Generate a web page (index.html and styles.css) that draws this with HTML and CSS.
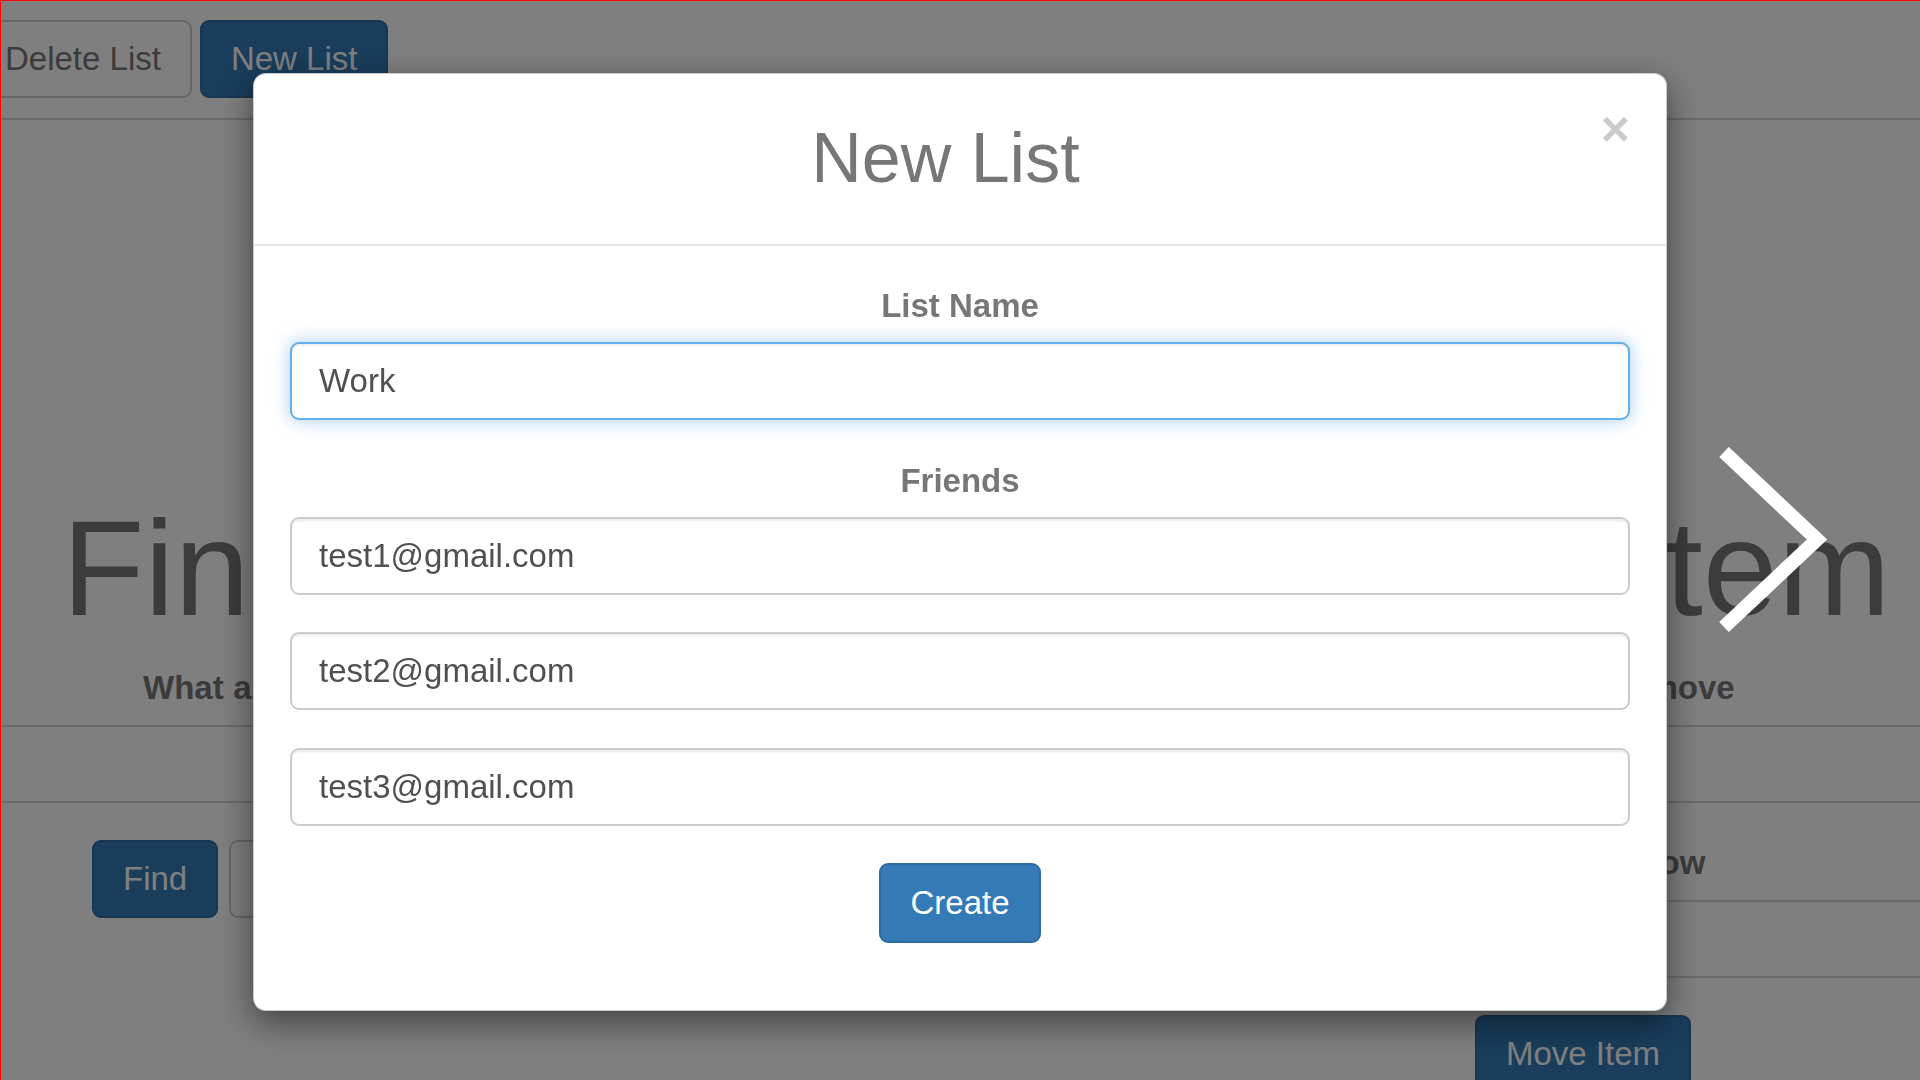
FILE: index.html
```html
<!DOCTYPE html>
<html lang="en">
<head>
<meta charset="utf-8">
<title>New List</title>
<link rel="stylesheet" href="styles.css">
</head>
<body>
<div class="page">
  <div class="topbar">
    <button class="btn btn-default btn-first">Delete List</button>
    <button class="btn btn-primary">New List</button>
  </div>
  <h1 class="hero-title">Find, Add, or Remove an Item</h1>
  <p class="hero-lead">What are you looking for? Find an item in your lists and decide whether to view, edit, copy or remove</p>
  <input class="field field-wide" type="text" value="">
  <div class="panels">
    <div class="panel-left">
      <button class="btn btn-primary">Find</button>
      <button class="btn btn-default">Clear</button>
    </div>
    <div class="panel-right">
      <label class="panel-label">Select list below</label>
      <input class="field field-move" type="text" value="">
      <button class="btn btn-primary btn-move">Move Item</button>
    </div>
  </div>
</div>

<div class="backdrop">
  <div class="modal">
    <div class="modal-header">
      <button class="close">&times;</button>
      <h2 class="modal-title">New List</h2>
    </div>
    <div class="modal-body">
      <label class="form-label">List Name</label>
      <input class="field field-focus" type="text" value="Work">
      <label class="form-label form-label-friends">Friends</label>
      <input class="field field-friend" type="text" value="test1@gmail.com">
      <input class="field field-friend field-gap" type="text" value="test2@gmail.com">
      <input class="field field-friend" type="text" value="test3@gmail.com">
      <div class="actions">
        <button class="btn btn-primary btn-create">Create</button>
      </div>
    </div>
  </div>
</div>

<div class="carousel-next">
  <svg width="150" height="220" viewBox="0 0 150 220">
    <polyline points="24,22 117,109.5 24,197" fill="none" stroke="#ffffff" stroke-width="14" stroke-linejoin="miter" stroke-miterlimit="10"/>
  </svg>
</div>

<div class="frame"></div>
</body>
</html>
```

FILE: styles.css
```css
html, body {
  margin: 0;
  padding: 0;
  width: 1920px;
  height: 1080px;
  overflow: hidden;
  background: #ffffff;
  font-family: "Liberation Sans", Arial, Helvetica, sans-serif;
}

.page {
  width: 1920px;
  height: 1080px;
  overflow: hidden;
}

/* buttons */
.btn {
  box-sizing: border-box;
  height: 78px;
  padding: 0 29px;
  border: 2px solid #cccccc;
  border-radius: 9px;
  font-family: "Liberation Sans", Arial, Helvetica, sans-serif;
  font-size: 33px;
  line-height: 74px;
  white-space: nowrap;
  cursor: pointer;
}

.btn-default {
  background: #ffffff;
  color: #777777;
  border-color: #cccccc;
}

.btn-primary {
  background: #337ab7;
  color: #ffffff;
  border-color: #2e6da4;
}

/* top bar */
.topbar {
  display: flex;
  gap: 8px;
  padding: 20px 0;
  border-bottom: 2px solid #d5d5d5;
}

.btn-first {
  margin-left: -26px;
}

/* hero */
.hero-title {
  margin: 375px 0 0 0;
  padding-left: 62px;
  font-size: 135px;
  line-height: 148px;
  font-weight: 400;
  color: #777777;
  white-space: nowrap;
  word-spacing: 7px;
}

.hero-lead {
  margin: 22px 0 0 0;
  padding-left: 143px;
  font-size: 33px;
  line-height: 46px;
  font-weight: 700;
  color: #777777;
  white-space: nowrap;
  word-spacing: 0.45px;
}

/* fields */
.field {
  display: block;
  box-sizing: border-box;
  height: 78px;
  padding: 0 27px;
  border: 2px solid #cccccc;
  border-radius: 9px;
  background: #ffffff;
  font-family: "Liberation Sans", Arial, Helvetica, sans-serif;
  font-size: 33px;
  color: #505050;
  box-shadow: inset 0 2px 2px rgba(0, 0, 0, 0.075);
  outline: none;
}

.field-wide {
  width: 1960px;
  margin: 14px 0 0 -20px;
  border-radius: 0;
  border-color: #d5d5d5;
  box-shadow: none;
}

/* lower panels */
.panels {
  display: flex;
  width: 1960px;
  margin-top: 37px;
}

.panel-left {
  flex: 0 0 1200px;
  box-sizing: border-box;
  padding-left: 92px;
  display: flex;
  align-items: flex-start;
  gap: 11px;
}

.panel-right {
  flex: 0 0 760px;
  display: flex;
  flex-direction: column;
  align-items: center;
}

.panel-label {
  font-size: 33px;
  line-height: 46px;
  font-weight: 700;
  color: #777777;
  margin-bottom: 14px;
  margin-right: 6px;
  white-space: nowrap;
}

.field-move {
  width: 760px;
  border-radius: 0;
  border-color: #d5d5d5;
  box-shadow: none;
}

.btn-move {
  margin-top: 37px;
  margin-left: 6px;
}

/* modal */
.backdrop {
  position: fixed;
  inset: 0;
  background: rgba(0, 0, 0, 0.5);
  display: flex;
  justify-content: center;
  align-items: flex-start;
  padding-top: 73px;
  z-index: 10;
}

.modal {
  box-sizing: border-box;
  width: 1414px;
  background: #ffffff;
  border: 1px solid rgba(0, 0, 0, 0.2);
  border-radius: 13px;
  box-shadow: 0 11px 34px rgba(0, 0, 0, 0.5);
}

.modal-header {
  padding: 46px 36px 47px;
  border-bottom: 2px solid #e5e5e5;
}

.close {
  float: right;
  margin-top: -16px;
  padding: 0;
  border: 0;
  background: none;
  font-family: "Liberation Sans", Arial, Helvetica, sans-serif;
  font-size: 50px;
  line-height: 50px;
  font-weight: 700;
  color: #000000;
  opacity: 0.2;
  cursor: pointer;
}

.modal-title {
  margin: 0;
  font-size: 70px;
  line-height: 77px;
  font-weight: 400;
  color: #777777;
  text-align: center;
}

.modal-body {
  padding: 37px 36px 36px;
}

.form-label {
  display: block;
  text-align: center;
  font-size: 33px;
  line-height: 46px;
  font-weight: 700;
  color: #777777;
  margin-bottom: 13px;
}

.form-label-friends {
  margin-top: 38px;
}

.field-focus,
.field-friend {
  width: 100%;
}

.field-focus {
  border-color: #66afe9;
  box-shadow: inset 0 2px 2px rgba(0, 0, 0, 0.075), 0 0 18px rgba(102, 175, 233, 0.6);
}

.field-gap {
  margin: 37px 0 38px;
}

.actions {
  display: flex;
  justify-content: center;
  margin-top: 37px;
  margin-bottom: 31px;
}

.btn-create {
  height: 80px;
  line-height: 76px;
}

/* carousel arrow over backdrop */
.carousel-next {
  position: fixed;
  left: 1700px;
  top: 430px;
  width: 150px;
  height: 220px;
  z-index: 20;
}

.carousel-next svg {
  display: block;
}

/* red frame of the capture */
.frame {
  position: fixed;
  inset: 0;
  border-top: 1px solid #ff0000;
  border-left: 1px solid #ff0000;
  pointer-events: none;
  z-index: 30;
}
```
